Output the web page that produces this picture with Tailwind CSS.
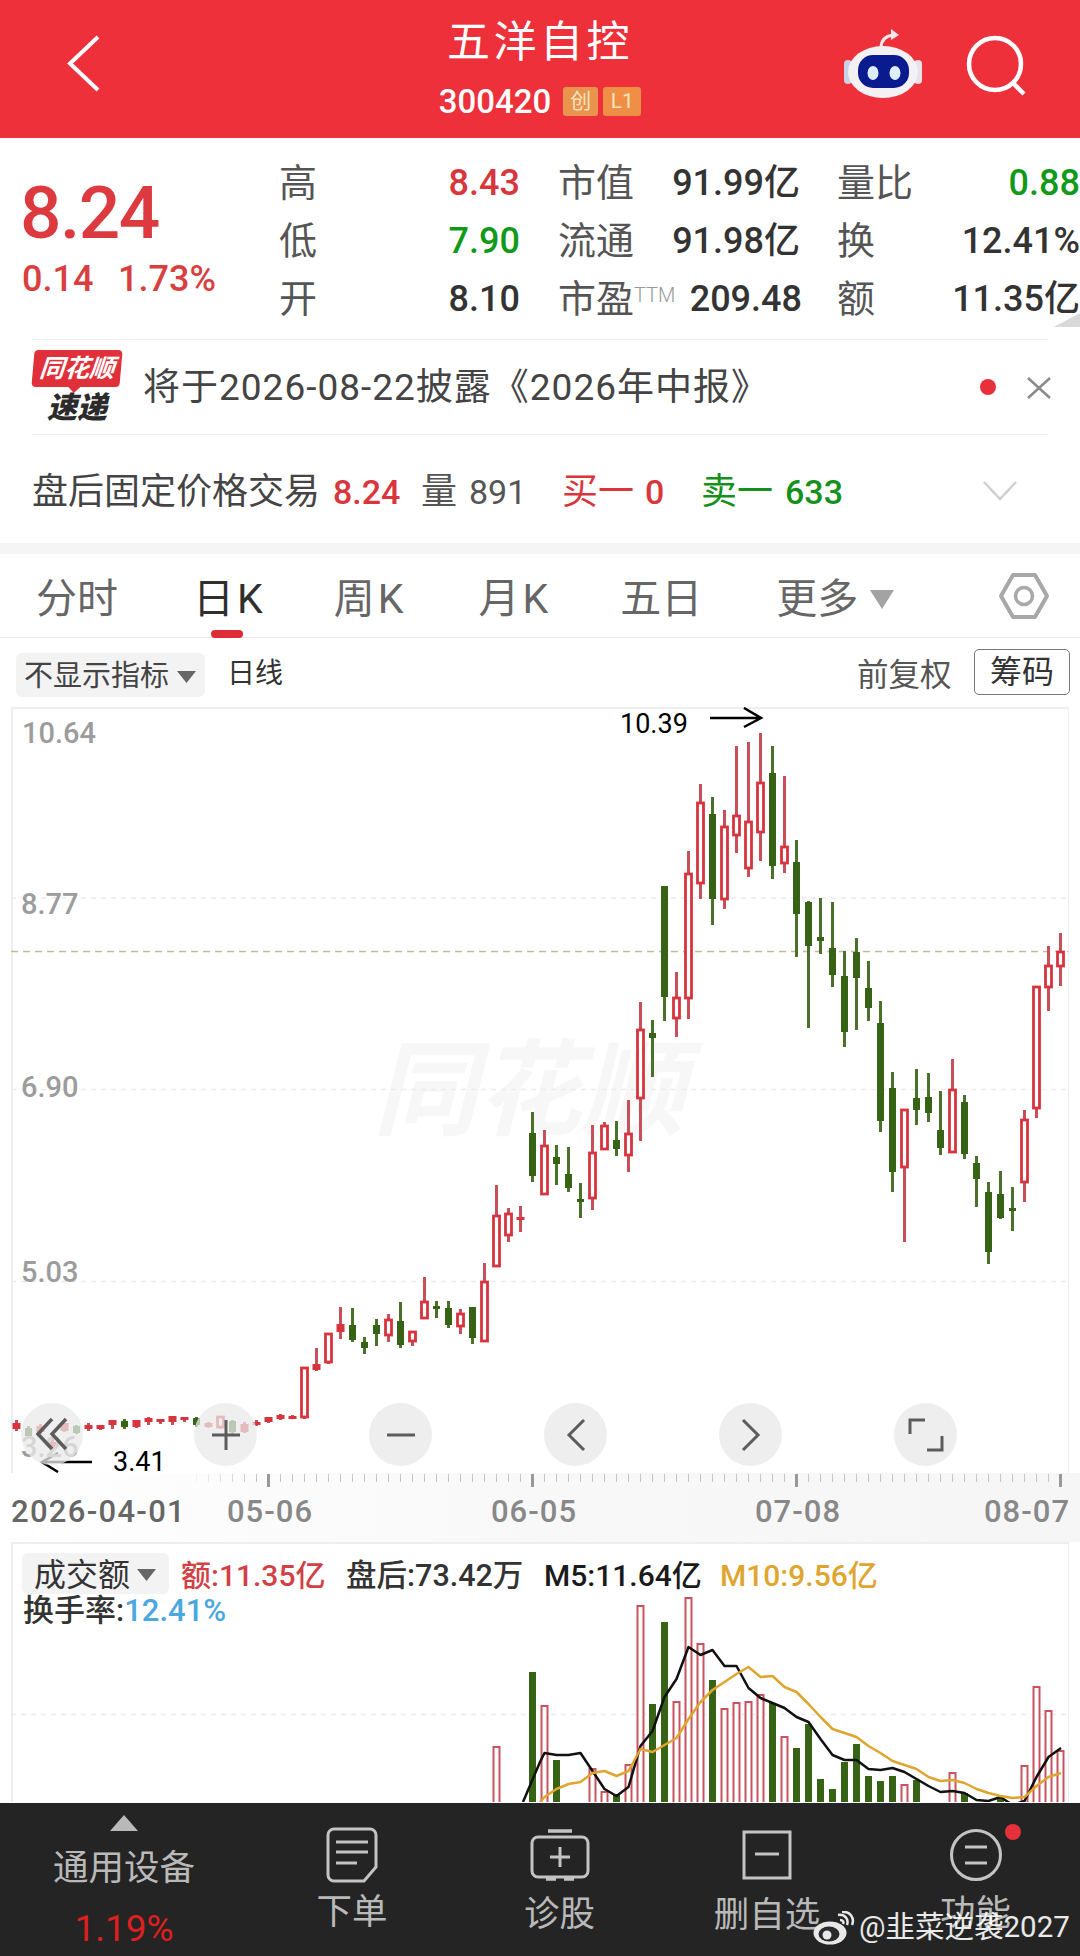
<!DOCTYPE html>
<html lang="zh">
<head>
<meta charset="UTF-8" />
<title>五洋自控</title>
<script src="https://cdn.jsdelivr.net/npm/@tailwindcss/browser@4"></script>
</head>
<body class="bg-white font-['Roboto','Noto_Sans_CJK_SC',sans-serif]">
<div class="relative w-[1080px] h-[1956px] overflow-hidden bg-white">

  <!-- Header -->
  <header class="flex h-[138px] bg-[#ee303a] text-white">
    <div class="w-[220px] pl-[67px] pt-[35px]">
      <svg width="34" height="58" viewBox="0 0 34 58" fill="none" stroke="white" stroke-width="4"><path d="M31 2 L3 28.500 L31 55" /></svg>
    </div>
    <div class="flex-1 flex flex-col items-center">
      <h1 class="text-[43px] leading-[50px] mt-[17px] tracking-[3.500px] font-normal">五洋自控</h1>
      <div class="flex items-center mt-[20px] h-[29px]">
        <span class="text-[33px] font-medium leading-none">300420</span>
        <span class="ml-[12px] w-[35px] h-[29px] flex items-center justify-center rounded-[3px] bg-[#e8944c] text-[#f9e2c0] text-[21px] leading-none">创</span>
        <span class="ml-[5px] w-[38px] h-[29px] flex items-center justify-center rounded-[3px] bg-[#ef8f45] text-[#f9e2c0] text-[21px] leading-none">L1</span>
      </div>
    </div>
    <div class="w-[220px] relative">
      <!-- robot -->
      <svg class="absolute -left-[19px] top-[28px]" width="84" height="72" viewBox="0 0 84 72">
        <path d="M40 20 C40 12 45 8 52 7" fill="none" stroke="#f6e9e9" stroke-width="3"/>
        <path d="M50 1 L58 7 L50 12 Z" fill="#f6e9e9"/>
        <rect x="3" y="32" width="8" height="24" rx="4" fill="#c9d3e6"/>
        <rect x="73" y="32" width="8" height="24" rx="4" fill="#e8e2e8"/>
        <ellipse cx="42" cy="44" rx="35" ry="26" fill="#f3f1f3"/>
        <rect x="17" y="27" width="51" height="33" rx="15" fill="#0a1a8f"/>
        <ellipse cx="32" cy="45" rx="5.500" ry="7" fill="#dcefff"/>
        <ellipse cx="54" cy="45" rx="5.500" ry="7" fill="#dcefff"/>
      </svg>
      <!-- search -->
      <svg class="absolute left-[104px] top-[30px]" width="70" height="70" viewBox="0 0 70 70" fill="none" stroke="white" stroke-width="4.500">
        <circle cx="31" cy="34" r="26" />
        <path d="M49 53 L60 64" />
      </svg>
    </div>
  </header>

  <!-- Quote stats -->
  <section class="flex h-[201px] pt-[16px] relative">
    <div class="w-[279px] pl-[20px]">
      <div class="text-[#dd3a3f] text-[73px] leading-[72px] font-medium mt-[23px] tracking-[-1.500px]">8.24</div>
      <div class="flex text-[#d8403f] text-[36px] leading-[40px] mt-[10px] ml-[2px] font-medium">
        <span class="w-[96px]">0.14</span><span>1.73%</span>
      </div>
    </div>
    <div class="grid grid-cols-[279px_279px_243px] auto-rows-[58px] text-[#333] text-[36px] font-medium items-center">
      <div class="flex justify-between items-center pr-[38px]"><span class="text-[#555] text-[38px] font-normal">高</span><span class="text-[#d8363c]">8.43</span></div>
      <div class="flex justify-between items-center pr-[37px]"><span class="text-[#555] text-[38px] font-normal">市值</span><span>91.99亿</span></div>
      <div class="flex justify-between items-center"><span class="text-[#555] text-[38px] font-normal">量比</span><span class="text-[#119a19]">0.88</span></div>
      <div class="flex justify-between items-center pr-[38px]"><span class="text-[#555] text-[38px] font-normal">低</span><span class="text-[#119a19]">7.90</span></div>
      <div class="flex justify-between items-center pr-[37px]"><span class="text-[#555] text-[38px] font-normal">流通</span><span>91.98亿</span></div>
      <div class="flex justify-between items-center"><span class="text-[#555] text-[38px] font-normal">换</span><span>12.41%</span></div>
      <div class="flex justify-between items-center pr-[38px]"><span class="text-[#555] text-[38px] font-normal">开</span><span>8.10</span></div>
      <div class="flex justify-between items-center pr-[35px]"><span class="text-[#555] text-[38px] font-normal leading-none">市盈<sup class="text-[#999] text-[20px] font-light -top-[10px]">TTM</sup></span><span>209.48</span></div>
      <div class="flex justify-between items-center"><span class="text-[#555] text-[38px] font-normal">额</span><span>11.35亿</span></div>
    </div>
    <svg class="absolute right-0 bottom-[12px]" width="26" height="14" viewBox="0 0 26 14"><path d="M26 0 L0 14 L26 14 Z" fill="#d9d9d9"/></svg>
  </section>

  <!-- News row -->
  <section class="mx-[32px] h-[95px] border-t border-[#ededed] flex items-center relative">
    <div class="w-[90px] flex flex-col items-center shrink-0 -mt-[1px]">
      <div class="relative w-[88px] h-[37px] rounded-[4px] bg-[#e0303a] flex items-center justify-center -skew-x-[5deg]">
        <span class="text-white text-[25px] leading-none font-bold italic">同花顺</span>
        <div class="absolute left-[36px] top-[36px] border-x-[7px] border-x-transparent border-t-[7px] border-t-[#e0303a]"></div>
      </div>
      <span class="text-[#2b2b2b] text-[30px] leading-[30px] font-black italic mt-[6px]">速递</span>
    </div>
    <p class="ml-[21px] text-[37px] tracking-[1px] text-[#444] leading-none">将于2026-08-22披露《2026年中报》</p>
    <span class="absolute left-[948px] top-[39px] w-[16px] h-[16px] rounded-full bg-[#e8303a]"></span>
    <svg class="absolute left-[994px] top-[36px]" width="26" height="24" viewBox="0 0 26 24" fill="none" stroke="#8a8a8a" stroke-width="2.500"><path d="M2 2 L24 22 M24 2 L2 22" /></svg>
  </section>

  <!-- After hours row -->
  <section class="mx-[32px] h-[109px] border-t border-[#ededed] flex items-center relative pt-[5px] text-[36px] leading-none">
    <span class="text-[#444] w-[301px] shrink-0">盘后固定价格交易</span>
    <span class="text-[#d8363c] font-medium text-[34px] w-[88px]">8.24</span>
    <span class="text-[#555] w-[48px]">量</span>
    <span class="text-[#555] text-[34px] w-[93px]">891</span>
    <span class="text-[#d8363c] w-[83px]">买一</span>
    <span class="text-[#d8363c] font-medium text-[34px] w-[56px]">0</span>
    <span class="text-[#14901c] w-[84px]">卖一</span>
    <span class="text-[#14901c] font-medium text-[34px]">633</span>
    <svg class="absolute left-[950px] top-[45px]" width="36" height="22" viewBox="0 0 36 22" fill="none" stroke="#cfcfcf" stroke-width="2.500"><path d="M2 2 L18 19 L34 2" /></svg>
  </section>

  <div class="h-[11px] bg-[#f5f5f5]"></div>

  <!-- Period tabs -->
  <nav class="relative flex h-[84px] items-center pl-[36px] border-b border-[#e6e6e6] text-[#666] text-[41px] leading-none pt-[8px]">
    <span>分时</span>
    <span class="relative ml-[75px] text-[#2f2f2f] tracking-[3px]">日K<span class="absolute left-[18px] top-[51px] w-[32px] h-[8px] rounded-full bg-[#dd2c36]"></span></span>
    <span class="ml-[68px] tracking-[3px]">周K</span>
    <span class="ml-[72px] tracking-[3px]">月K</span>
    <span class="ml-[69px]">五日</span>
    <span class="ml-[74px]">更多</span>
    <svg class="ml-[12px]" width="24" height="19" viewBox="0 0 24 19"><path d="M0 0 H24 L12 19 Z" fill="#a3a3a3"/></svg>
    <svg class="absolute left-[998px] top-[18px]" width="52" height="48" viewBox="0 0 52 48" fill="none" stroke="#a8a8a8"><path d="M15 3 H37 L49 24 L37 45 H15 L3 24 Z" stroke-width="4" stroke-linejoin="round"/><circle cx="26" cy="24" r="8.500" stroke-width="3.500"/></svg>
  </nav>

  <!-- Indicator row -->
  <div class="relative h-[69px]">
    <div class="absolute left-[16px] top-[15px] w-[189px] h-[44px] rounded-[6px] bg-[#f3f3f3] flex items-center pl-[8px] pt-[3px] text-[#444] text-[29px] leading-none">
      <span>不显示指标</span>
      <svg class="ml-[8px]" width="19" height="12" viewBox="0 0 19 12"><path d="M0 0 H19 L9.500 12 Z" fill="#666"/></svg>
    </div>
    <span class="absolute left-[227px] top-[22px] text-[#333] text-[28px] leading-none">日线</span>
    <span class="absolute left-[857px] top-[22px] text-[#555] text-[31.500px] leading-none">前复权</span>
    <span class="absolute left-[974px] top-[11px] w-[96px] h-[46px] rounded-[5px] border border-[#777] flex items-center justify-center text-[#333] text-[32px] leading-none">筹码</span>
  </div>

  <!-- Candle chart -->
  <div class="relative ml-[11px] w-[1058px] h-[766px] border-t-2 border-l-2 border-r border-[#eeeeee]">
    <svg id="kline" class="absolute -left-[2px] -top-[2px]" width="1058" height="766" viewBox="11 708 1058 766"></svg>
    <span class="absolute left-[9px] top-[9px] text-[#9c9c9c] text-[29px] leading-[30px] font-medium">10.64</span>
    <span class="absolute left-[8px] top-[180px] text-[#9c9c9c] text-[29px] leading-[30px] font-medium">8.77</span>
    <span class="absolute left-[8px] top-[363px] text-[#9c9c9c] text-[29px] leading-[30px] font-medium">6.90</span>
    <span class="absolute left-[8px] top-[548px] text-[#9c9c9c] text-[29px] leading-[30px] font-medium">5.03</span>
    <span class="absolute left-[8px] top-[723px] text-[#9c9c9c] text-[29px] leading-[30px] font-medium">3.26</span>
    <span class="absolute left-[607px] top-[0px] text-black text-[27px] leading-[30px]">10.39</span>
    <span class="absolute left-[100px] top-[738px] text-black text-[27px] leading-[30px]">3.41</span>
    <!-- round tool buttons sit on top of the candles -->
    <button class="absolute left-[8px] top-[694px] w-[62px] h-[62px] rounded-full bg-[#e9e9e9]/75 flex items-center justify-center"><svg width="32" height="34" viewBox="0 0 32 34" fill="none" stroke="#5c5c5c" stroke-width="3.500"><path d="M16 2 L2 17 L16 32 M30 2 L16 17 L30 32"/></svg></button>
    <button class="absolute left-[181px] top-[694px] w-[63px] h-[63px] rounded-full bg-[#e9e9e9]/75 flex items-center justify-center"><svg width="30" height="32" viewBox="0 0 30 32" fill="none" stroke="#5c5c5c" stroke-width="3"><path d="M15 1 V31 M1 16 H29"/></svg></button>
    <button class="absolute left-[356px] top-[694px] w-[63px] h-[63px] rounded-full bg-[#eeeeee] flex items-center justify-center"><svg width="30" height="6" viewBox="0 0 30 6" fill="none" stroke="#5c5c5c" stroke-width="3"><path d="M1 3 H29"/></svg></button>
    <button class="absolute left-[531px] top-[694px] w-[63px] h-[63px] rounded-full bg-[#eeeeee] flex items-center justify-center"><svg width="20" height="34" viewBox="0 0 20 34" fill="none" stroke="#5c5c5c" stroke-width="3"><path d="M18 2 L3 17 L18 32"/></svg></button>
    <button class="absolute left-[706px] top-[694px] w-[63px] h-[63px] rounded-full bg-[#eeeeee] flex items-center justify-center"><svg width="20" height="34" viewBox="0 0 20 34" fill="none" stroke="#5c5c5c" stroke-width="3"><path d="M2 2 L17 17 L2 32"/></svg></button>
    <button class="absolute left-[881px] top-[694px] w-[63px] h-[63px] rounded-full bg-[#eeeeee] flex items-center justify-center"><svg width="36" height="36" viewBox="0 0 36 36" fill="none" stroke="#5c5c5c" stroke-width="3"><path d="M2 17 V3 H17 M34 19 V33 H19"/></svg></button>
  </div>

  <!-- Date strip -->
  <div class="relative h-[69px] bg-gradient-to-r from-white via-[#f8f8f8] to-[#f6f6f6] font-medium text-[#888] text-[31px] leading-none">
    <svg id="ticks" class="absolute left-0 top-0" width="1080" height="16" viewBox="0 1474 1080 16"></svg>
    <span class="absolute left-[11px] top-[23px] text-[#666] tracking-[1.300px]">2026-04-01</span>
    <span class="absolute left-[227px] top-[23px] tracking-[1px]">05-06</span>
    <span class="absolute left-[491px] top-[23px] tracking-[1px]">06-05</span>
    <span class="absolute left-[755px] top-[23px] tracking-[1px]">07-08</span>
    <span class="absolute left-[984px] top-[23px] tracking-[1px]">08-07</span>
  </div>

  <!-- Turnover chart -->
  <div class="relative ml-[11px] w-[1058px] h-[260px] border-t-2 border-l-2 border-r border-[#eeeeee]">
    <svg id="vol" class="absolute -left-[2px] -top-[2px]" width="1058" height="260" viewBox="11 1543 1058 260"></svg>
    <div class="absolute left-[9px] top-[9px] w-[147px] h-[41px] rounded-[6px] bg-[#f3f3f3] flex items-center pl-[12px] pt-[2px] text-[#333] text-[32px] leading-none">
      <span>成交额</span>
      <svg class="ml-[7px]" width="19" height="12" viewBox="0 0 19 12"><path d="M0 0 H19 L9.500 12 Z" fill="#666"/></svg>
    </div>
    <div class="absolute left-[168px] top-[16px] flex text-[30.500px] leading-[32px] font-medium whitespace-nowrap">
      <span class="text-[#d23f44] w-[165px] text-[30px]">额:11.35亿</span>
      <span class="text-[#333] w-[198px]">盘后:73.42万</span>
      <span class="text-[#1a1a1a] w-[176px] text-[30px]">M5:11.64亿</span>
      <span class="text-[#e0a52f] text-[30px]">M10:9.56亿</span>
    </div>
    <div class="absolute left-[10px] top-[51px] text-[31px] leading-[32px] font-medium text-[#333] whitespace-nowrap">换手率:<span class="text-[#4aa8e0]">12.41%</span></div>
  </div>

  <!-- Bottom toolbar -->
  <footer class="absolute left-0 bottom-0 w-[1080px] h-[153px] bg-[#242424] grid grid-cols-[248px_208px_207px_208px_209px] text-[#b9b9b9] text-[35.500px] leading-none">
    <div class="flex flex-col items-center pt-[12px]">
      <svg width="28" height="16" viewBox="0 0 28 16"><path d="M14 0 L28 16 H0 Z" fill="#b9b9b9"/></svg>
      <span class="mt-[20px]">通用设备</span>
      <span class="mt-[23px] text-[#dd1f1f] text-[37px]">1.19%</span>
    </div>
    <div class="flex flex-col items-center pt-[24px]">
      <svg width="52" height="56" viewBox="0 0 52 56" fill="none" stroke="#c4c4c4" stroke-width="3"><path d="M8 2 H44 a6 6 0 0 1 6 6 V40 L38 54 H8 a6 6 0 0 1 -6 -6 V8 a6 6 0 0 1 6 -6 Z"/><path d="M10 15 H42 M10 25 H42 M10 36 H31" /></svg>
      <span class="mt-[12px]">下单</span>
    </div>
    <div class="flex flex-col items-center pt-[26px]">
      <svg width="60" height="54" viewBox="0 0 60 54" fill="none" stroke="#c4c4c4" stroke-width="3"><path d="M18 2 H42 M16 50 H26 M34 50 H44" stroke-width="3.500"/><rect x="2" y="8" width="56" height="40" rx="6"/><path d="M30 18 V38 M20 28 H40"/></svg>
      <span class="mt-[14px]">诊股</span>
    </div>
    <div class="flex flex-col items-center pt-[27px]">
      <svg width="50" height="50" viewBox="0 0 50 50" fill="none" stroke="#c4c4c4" stroke-width="3"><rect x="2" y="2" width="46" height="46"/><path d="M13 24 H37"/></svg>
      <span class="mt-[18px]">删自选</span>
    </div>
    <div class="relative flex flex-col items-center pt-[25px]">
      <svg width="52" height="54" viewBox="0 0 52 54" fill="none" stroke="#c4c4c4" stroke-width="3"><circle cx="26" cy="27" r="24.500"/><path d="M15 19 H37 M15 35 H37"/></svg>
      <span class="mt-[14px]">功能</span>
      <span class="absolute left-[134px] top-[21px] w-[16px] h-[16px] rounded-full bg-[#e8303a]"></span>
    </div>
  </footer>

  <!-- Weibo watermark -->
  <div class="absolute left-[813px] top-[1911px] flex items-center text-white/90 text-[29.500px] leading-none">
    <svg width="42" height="34" viewBox="0 0 42 34">
      <ellipse cx="17" cy="22" rx="16.500" ry="11.500" fill="#e8e8e8"/>
      <ellipse cx="16" cy="23" rx="10.500" ry="7.500" fill="#2a2a2a"/>
      <circle cx="14" cy="24" r="4.500" fill="#e8e8e8"/>
      <path d="M25 4 C32 3 36 8 34 14 M27 9 C30 9 31 11 30 13 M29 1 C37 0 42 7 39 14" fill="none" stroke="#e8e8e8" stroke-width="2.500"/>
    </svg>
    <span class="ml-[4px] whitespace-nowrap">@韭菜逆袭2027</span>
  </div>
</div>

<script>
  // [colour, high, bodyTop, bodyBottom, low]
  var candles = [
    ['r',1421,1424,1430,1432],['g',1427,1429,1437,1438],['r',1425,1427,1433,1435],['r',1440,1443,1448,1450],
    ['r',1424,1424,1432,1433],['g',1426,1427,1434,1435],['r',1424,1426,1430,1432],['r',1426,1426,1430,1431],
    ['r',1421,1421,1426,1430],['g',1420,1422,1428,1430],['r',1421,1421,1428,1429],['r',1418,1419,1423,1426],
    ['r',1420,1420,1423,1425],['r',1417,1417,1423,1426],['r',1418,1418,1421,1423],['g',1418,1419,1426,1428],
    ['r',1423,1424,1428,1429],['r',1417,1418,1428,1430],['g',1421,1422,1433,1435],['r',1423,1425,1433,1434],
    ['r',1421,1423,1426,1427],['r',1418,1418,1423,1424],['r',1415,1416,1420,1421],['r',1416,1417,1420,1420],
    ['r',1369,1369,1418,1420],['r',1349,1365,1371,1372],['r',1335,1335,1363,1365],['r',1308,1325,1333,1340],
    ['g',1309,1326,1341,1343],['g',1338,1343,1349,1355],['g',1320,1326,1335,1347],['r',1315,1321,1336,1343],
    ['g',1303,1322,1346,1349],['r',1332,1333,1342,1347],['r',1278,1303,1319,1319],['g',1302,1307,1309,1319],
    ['g',1302,1309,1326,1329],['r',1310,1315,1327,1335],['g',1308,1308,1339,1345],['r',1264,1283,1342,1343],
    ['r',1186,1217,1267,1267],['r',1209,1215,1236,1243],['r',1207,1218,1221,1233],['g',1113,1134,1177,1183],
    ['r',1131,1147,1195,1196],['g',1146,1158,1165,1186],['g',1148,1175,1189,1193],['g',1184,1200,1203,1219],
    ['r',1126,1154,1199,1211],['r',1123,1127,1150,1150],['g',1122,1141,1150,1157],['r',1101,1135,1156,1173],
    ['r',1003,1031,1099,1142],['g',1021,1034,1039,1078],['g',887,887,998,1022],['r',973,999,1019,1038],
    ['r',852,875,999,1020],['r',785,804,884,900],['g',798,815,900,926],['r',811,828,900,910],
    ['r',747,817,836,854],['r',743,823,869,878],['r',734,784,833,862],['g',747,774,867,880],
    ['r',777,848,864,874],['g',841,863,915,958],['g',902,903,947,1029],['g',899,938,942,955],
    ['g',903,949,976,988],['g',952,977,1033,1048],['g',939,953,979,1031],['g',962,989,1009,1022],
    ['g',1002,1024,1122,1133],['g',1073,1089,1173,1193],['r',1111,1111,1168,1243],['g',1070,1099,1111,1126],
    ['g',1074,1098,1114,1123],['g',1092,1131,1149,1156],['r',1060,1091,1153,1153],['g',1096,1103,1155,1160],
    ['g',1157,1164,1180,1208],['g',1183,1193,1253,1265],['g',1172,1195,1219,1220],['g',1188,1209,1212,1232],
    ['r',1111,1121,1183,1203],['r',988,988,1109,1119],['r',947,967,988,1012],['r',934,953,967,987]
  ];
  var RED = '#d8343d', GREEN = '#376317', WICK_R = '#c8505a', WICK_G = '#4a7029';
  function cx(i) { return 16.5 + 12 * i; }

  var k = '';
  // watermark and grid
  k += '<text x="373" y="1128" font-size="104" font-weight="700" font-style="italic" font-family="Noto Sans CJK SC" fill="#f7f7f7">同花顺</text>';
  [899, 1090.5, 1282.5].forEach(function (y) {
    k += '<line x1="11" x2="1068" y1="' + y + '" y2="' + y + '" stroke="#ececec" stroke-width="1.500" stroke-dasharray="5 5"/>';
  });
  k += '<line x1="11" x2="1068" y1="952.500" y2="952.500" stroke="#c6bb96" stroke-width="1.500" stroke-dasharray="7 5"/>';
  candles.forEach(function (c, i) {
    var x = cx(i), col = c[0] == 'r' ? RED : GREEN, wick = c[0] == 'r' ? WICK_R : WICK_G;
    k += '<line x1="' + x + '" x2="' + x + '" y1="' + c[1] + '" y2="' + c[4] + '" stroke="' + wick + '" stroke-width="3"/>';
    if (c[0] == 'g') {
      k += '<rect x="' + (x - 3.5) + '" y="' + c[2] + '" width="7" height="' + Math.max(c[3] - c[2], 3) + '" fill="' + col + '"/>';
    } else if (c[3] - c[2] < 9) {
      k += '<rect x="' + (x - 4) + '" y="' + c[2] + '" width="8" height="' + Math.max(c[3] - c[2], 3) + '" fill="' + col + '"/>';
    } else {
      k += '<rect x="' + (x - 3) + '" y="' + c[2] + '" width="6" height="' + (c[3] - c[2]) + '" fill="#fff" stroke="' + col + '" stroke-width="2.800"/>';
    }
  });
  // hand drawn arrows of the annotation
  k += '<path d="M710 719 H760 M744 709 L761 719 L744 728" fill="none" stroke="#000" stroke-width="2.500"/>';
  k += '<path d="M92 1463 H42 M58 1454 L42 1463 L58 1473" fill="none" stroke="#000" stroke-width="2.500"/>';
  document.getElementById('kline').innerHTML = k;

  // ticks under the chart
  var t = '';
  for (var i = 15; i < 88; i++) {
    var major = (i - 21) % 22 == 0;
    var op = i < 20 ? (i - 14) / 6 : 1;
    t += '<rect x="' + (cx(i) - (major ? 1.5 : 0.5)) + '" y="1475" width="' + (major ? 3 : 1) + '" height="' + (major ? 13 : 8) + '" fill="' + (major ? '#999' : '#c4c4c4') + '" opacity="' + op + '"/>';
  }
  document.getElementById('ticks').innerHTML = t;

  // turnover bars: [index, colour, top]
  var bars = [[40,'r',1748],[43,'g',1673],[44,'r',1707],[45,'g',1761],[48,'r',1770],[49,'r',1793],[50,'g',1796],[51,'r',1766],
    [52,'r',1607],[53,'g',1705],[54,'g',1623],[55,'r',1703],[56,'r',1599],[57,'r',1645],[58,'g',1681],[59,'r',1710],
    [60,'r',1704],[61,'r',1703],[62,'r',1696],[63,'g',1704],[64,'r',1738],[65,'g',1749],[66,'g',1725],[67,'g',1780],
    [68,'g',1790],[69,'g',1763],[70,'g',1745],[71,'g',1777],[72,'g',1782],[73,'g',1777],[74,'r',1786],[75,'g',1781],
    [78,'r',1774],[79,'g',1794],[82,'g',1799],[84,'r',1767],[85,'r',1688],[86,'r',1712],[87,'r',1752]];
  var v = '<line x1="11" x2="1068" y1="1715.500" y2="1715.500" stroke="#ececec" stroke-width="1.500" stroke-dasharray="5 5"/>';
  bars.forEach(function (b) {
    var x = cx(b[0]);
    if (b[1] == 'g') v += '<rect x="' + (x - 3.5) + '" y="' + b[2] + '" width="7" height="' + (1810 - b[2]) + '" fill="' + GREEN + '"/>';
    else v += '<rect x="' + (x - 3) + '" y="' + b[2] + '" width="6" height="' + (1810 - b[2]) + '" fill="#fff" stroke="#c9525e" stroke-width="2"/>';
  });
  var black = [[523,1803],[540,1763],[544.5,1754],[556.5,1756],[568.5,1756],[580.5,1754],[592.5,1772],[604.5,1790],[616.5,1797],[628.5,1788],[640.5,1747],[652.5,1732],[664.5,1698],[676.5,1680],[688.5,1648],[700.5,1656],[712.5,1651],[724.5,1667],[736.5,1667],[748.5,1689],[760.5,1699],[772.5,1704],[784.5,1709],[796.5,1718],[808.5,1723],[820.5,1740],[832.5,1756],[844.5,1761],[856.5,1761],[868.5,1770],[880.5,1771],[892.5,1769],[904.5,1773],[916.5,1780],[928.5,1787],[940.5,1793],[952.5,1792],[964.5,1794],[976.5,1801],[988.5,1802],[1000.5,1798],[1012.5,1806],[1024.5,1802],[1036.5,1778],[1048.5,1758],[1061,1749]];
  var amber = [[540,1803],[544.5,1798],[556.5,1790],[568.5,1785],[580.5,1783],[592.5,1774],[604.5,1772],[616.5,1777],[628.5,1772],[640.5,1750],[652.5,1753],[664.5,1746],[676.5,1739],[688.5,1720],[700.5,1703],[712.5,1691],[724.5,1683],[736.5,1675],[748.5,1668],[760.5,1678],[772.5,1677],[784.5,1688],[796.5,1693],[808.5,1705],[820.5,1718],[832.5,1730],[844.5,1734],[856.5,1738],[868.5,1747],[880.5,1754],[892.5,1762],[904.5,1766],[916.5,1770],[928.5,1778],[940.5,1782],[952.5,1781],[964.5,1784],[976.5,1790],[988.5,1794],[1000.5,1797],[1012.5,1799],[1024.5,1798],[1036.5,1787],[1048.5,1778],[1061,1774]];
  function line(p, col) {
    return '<polyline fill="none" stroke="' + col + '" stroke-width="2.500" stroke-linejoin="round" points="' + p.map(function (q) { return q.join(','); }).join(' ') + '"/>';
  }
  v += line(black, '#111') + line(amber, '#e0a52f');
  document.getElementById('vol').innerHTML = v;
</script>
</body>
</html>
